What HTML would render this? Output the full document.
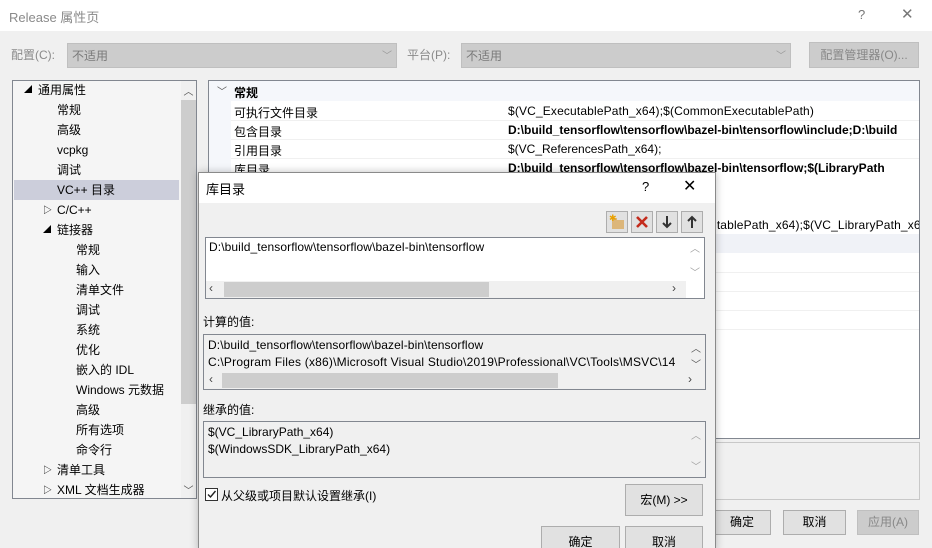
<!DOCTYPE html>
<html><head><meta charset="utf-8"><style>
*{box-sizing:border-box;margin:0;padding:0}
html,body{width:932px;height:548px;overflow:hidden}
body{background:#f0f0f0;font-family:"Liberation Sans","Noto Sans CJK SC",sans-serif;font-size:12px;color:#000;position:relative}
.a{position:absolute;white-space:nowrap}
.t{line-height:20px;height:20px}
.btn{position:absolute;background:#e1e1e1;border:1px solid #adadad;text-align:center}
.sb{position:absolute;color:#a0a0a0;font-size:10px;text-align:center}
</style></head><body>
<div class="a" style="left:0;top:0;width:932px;height:31px;background:#fff"></div>
<div class="a" style="left:9px;top:7px;color:#8a8a8a;font-size:13px">Release 属性页</div>
<div class="a" style="left:858px;top:7px;color:#777;font-size:13px">?</div>
<div class="a" style="left:901px;top:5px;color:#777;font-size:15px">✕</div>

<div class="a" style="left:11px;top:46px;color:#8a8a8a">配置(C):</div>
<div class="a" style="left:67px;top:43px;width:330px;height:25px;background:#cccccc;border:1px solid #bfbfbf"></div>
<div class="a" style="left:72px;top:47px;color:#7a7a7a">不适用</div>
<div class="a" style="left:382px;top:47px;color:#999;font-size:10px">﹀</div>
<div class="a" style="left:407px;top:46px;color:#8a8a8a">平台(P):</div>
<div class="a" style="left:461px;top:43px;width:330px;height:25px;background:#cccccc;border:1px solid #bfbfbf"></div>
<div class="a" style="left:466px;top:47px;color:#7a7a7a">不适用</div>
<div class="a" style="left:776px;top:47px;color:#999;font-size:10px">﹀</div>
<div class="btn" style="left:809px;top:42px;width:110px;height:26px;background:#cccccc;border-color:#bfbfbf;color:#888;line-height:24px">配置管理器(O)...</div>

<div class="a" style="left:12px;top:80px;width:185px;height:419px;background:#f5f5f5;border:1px solid #828790"></div>
<div class="a" style="left:181px;top:81px;width:15px;height:417px;background:#f0f0f0"></div>
<div class="a" style="left:181px;top:100px;width:15px;height:304px;background:#cdcdcd"></div>
<div class="sb" style="left:181px;top:83px;width:15px;color:#555">︿</div>
<div class="sb" style="left:181px;top:482px;width:15px;color:#555">﹀</div>
<div class="a" style="left:14px;top:180px;width:165px;height:20px;background:#cccedb"></div>
<div class="a t" style="left:24px;top:80px;font-size:8px">◢</div>
<div class="a t" style="left:38px;top:80px">通用属性</div>
<div class="a t" style="left:57px;top:100px">常规</div>
<div class="a t" style="left:57px;top:120px">高级</div>
<div class="a t" style="left:57px;top:140px">vcpkg</div>
<div class="a t" style="left:57px;top:160px">调试</div>
<div class="a t" style="left:57px;top:180px">VC++ 目录</div>
<div class="a t" style="left:43px;top:200px;font-size:9px">▷</div>
<div class="a t" style="left:57px;top:200px">C/C++</div>
<div class="a t" style="left:43px;top:220px;font-size:8px">◢</div>
<div class="a t" style="left:57px;top:220px">链接器</div>
<div class="a t" style="left:76px;top:240px">常规</div>
<div class="a t" style="left:76px;top:260px">输入</div>
<div class="a t" style="left:76px;top:280px">清单文件</div>
<div class="a t" style="left:76px;top:300px">调试</div>
<div class="a t" style="left:76px;top:320px">系统</div>
<div class="a t" style="left:76px;top:340px">优化</div>
<div class="a t" style="left:76px;top:360px">嵌入的 IDL</div>
<div class="a t" style="left:76px;top:380px">Windows 元数据</div>
<div class="a t" style="left:76px;top:400px">高级</div>
<div class="a t" style="left:76px;top:420px">所有选项</div>
<div class="a t" style="left:76px;top:440px">命令行</div>
<div class="a t" style="left:43px;top:460px;font-size:9px">▷</div>
<div class="a t" style="left:57px;top:460px">清单工具</div>
<div class="a t" style="left:43px;top:480px;font-size:9px">▷</div>
<div class="a t" style="left:57px;top:480px">XML 文档生成器</div>

<div class="a" style="left:208px;top:80px;width:712px;height:359px;background:#fff;border:1px solid #828790;overflow:hidden">
 <div class="a" style="left:0;top:0;width:710px;height:20px;background:#f5f7fb"></div>
 <div class="a" style="left:0;top:0;width:22px;height:360px;background:#f5f7fb"></div>
 <div class="a" style="left:0;top:153px;width:710px;height:19px;background:#f0f2f7"></div>
 <div class="a" style="left:22px;top:39px;width:690px;border-top:1px solid #f0f0f0"></div>
 <div class="a" style="left:22px;top:58px;width:690px;border-top:1px solid #f0f0f0"></div>
 <div class="a" style="left:22px;top:77px;width:690px;border-top:1px solid #f0f0f0"></div>
 <div class="a" style="left:22px;top:191px;width:690px;border-top:1px solid #f0f0f0"></div>
 <div class="a" style="left:22px;top:210px;width:690px;border-top:1px solid #f0f0f0"></div>
 <div class="a" style="left:22px;top:229px;width:690px;border-top:1px solid #f0f0f0"></div>
 <div class="a" style="left:22px;top:248px;width:690px;border-top:1px solid #f0f0f0"></div>
 <div class="a" style="left:8px;top:2px;font-size:10px;color:#555">﹀</div>
 <div class="a" style="left:25px;top:3px;font-weight:bold">常规</div>
 <div class="a" style="left:25px;top:23px">可执行文件目录</div>
 <div class="a" style="left:299px;top:23px;letter-spacing:0.15px">$(VC_ExecutablePath_x64);$(CommonExecutablePath)</div>
 <div class="a" style="left:25px;top:42px">包含目录</div>
 <div class="a" style="left:299px;top:42px;font-weight:bold">D:\build_tensorflow\tensorflow\bazel-bin\tensorflow\include;D:\build</div>
 <div class="a" style="left:25px;top:61px">引用目录</div>
 <div class="a" style="left:299px;top:61px">$(VC_ReferencesPath_x64);</div>
 <div class="a" style="left:25px;top:80px">库目录</div>
 <div class="a" style="left:299px;top:80px;font-weight:bold">D:\build_tensorflow\tensorflow\bazel-bin\tensorflow;$(LibraryPath</div>
 <div class="a" style="left:258px;top:137px;letter-spacing:0.15px">$(VC_ExecutablePath_x64);$(CommonExecutablePath_x64);$(VC_LibraryPath_x64);</div>
</div>
<div class="a" style="left:208px;top:442px;width:712px;height:58px;border:1px solid #c8c8c8"></div>
<div class="btn" style="left:713px;top:510px;width:58px;height:25px;line-height:23px">确定</div>
<div class="btn" style="left:783px;top:510px;width:63px;height:25px;line-height:23px">取消</div>
<div class="btn" style="left:857px;top:510px;width:62px;height:25px;line-height:23px;background:#cccccc;border-color:#bfbfbf;color:#888">应用(A)</div>

<div class="a" style="left:198px;top:172px;width:518px;height:380px;background:#f0f0f0;border:1px solid #8a8a8a;box-shadow:0 0 8px rgba(0,0,0,.25)"></div>
<div class="a" style="left:199px;top:173px;width:516px;height:30px;background:#fff"></div>
<div class="a" style="left:206px;top:179px;font-size:13px">库目录</div>
<div class="a" style="left:642px;top:179px;font-size:13px">?</div>
<div class="a" style="left:683px;top:176px;font-size:16px">✕</div>

<div class="btn" style="left:606px;top:211px;width:22px;height:22px;background:#e1e1e1">
 <svg width="20" height="20" style="position:absolute;left:0;top:0"><rect x="5" y="8" width="12" height="9" fill="#dcb67a"/><rect x="5" y="6" width="5" height="3" fill="#dcb67a"/><text x="2" y="9" font-size="9" fill="#e8a000">✱</text></svg>
</div>
<div class="btn" style="left:631px;top:211px;width:22px;height:22px">
 <svg width="20" height="20" style="position:absolute;left:0;top:0"><path d="M5 5L15 15M15 5L5 15" stroke="#c42b1c" stroke-width="2.6"/></svg>
</div>
<div class="btn" style="left:656px;top:211px;width:22px;height:22px">
 <svg width="20" height="20" style="position:absolute;left:0;top:0"><path d="M10 4V15M6 11L10 15L14 11" stroke="#333" stroke-width="2" fill="none"/></svg>
</div>
<div class="btn" style="left:681px;top:211px;width:22px;height:22px">
 <svg width="20" height="20" style="position:absolute;left:0;top:0"><path d="M10 16V5M6 9L10 5L14 9" stroke="#333" stroke-width="2" fill="none"/></svg>
</div>

<div class="a" style="left:205px;top:237px;width:500px;height:62px;background:#fff;border:1px solid #828790"></div>
<div class="a" style="left:209px;top:240px;letter-spacing:0.1px">D:\build_tensorflow\tensorflow\bazel-bin\tensorflow</div>
<div class="sb" style="left:687px;top:240px;width:16px">︿</div>
<div class="sb" style="left:687px;top:264px;width:16px">﹀</div>
<div class="a" style="left:206px;top:281px;width:480px;height:17px;background:#f0f0f0"></div>
<div class="a" style="left:224px;top:282px;width:265px;height:15px;background:#cdcdcd"></div>
<div class="a" style="left:209px;top:281px;color:#444;font-size:12px">‹</div>
<div class="a" style="left:672px;top:281px;color:#444;font-size:12px">›</div>

<div class="a" style="left:203px;top:313px">计算的值:</div>
<div class="a" style="left:203px;top:334px;width:503px;height:56px;border:1px solid #828790"></div>
<div class="a" style="left:208px;top:338px;letter-spacing:0.1px">D:\build_tensorflow\tensorflow\bazel-bin\tensorflow</div>
<div class="a" style="left:208px;top:355px;width:478px;overflow:hidden;letter-spacing:0.2px">C:\Program Files (x86)\Microsoft Visual Studio\2019\Professional\VC\Tools\MSVC\14</div>
<div class="sb" style="left:689px;top:340px;width:14px;color:#555">︿</div>
<div class="sb" style="left:689px;top:356px;width:14px;color:#555">﹀</div>
<div class="a" style="left:222px;top:373px;width:336px;height:15px;background:#cdcdcd"></div>
<div class="a" style="left:209px;top:372px;color:#444;font-size:12px">‹</div>
<div class="a" style="left:688px;top:372px;color:#444;font-size:12px">›</div>

<div class="a" style="left:203px;top:401px">继承的值:</div>
<div class="a" style="left:203px;top:421px;width:503px;height:57px;border:1px solid #828790"></div>
<div class="a" style="left:208px;top:425px">$(VC_LibraryPath_x64)</div>
<div class="a" style="left:208px;top:442px">$(WindowsSDK_LibraryPath_x64)</div>
<div class="sb" style="left:689px;top:427px;width:14px">︿</div>
<div class="sb" style="left:689px;top:458px;width:14px">﹀</div>

<div class="a" style="left:205px;top:488px;width:13px;height:13px;border:1px solid #333;background:#fff">
 <svg width="11" height="11" style="position:absolute;left:0;top:0"><path d="M2 5.5L4.5 8L9.5 2" stroke="#222" stroke-width="1.4" fill="none"/></svg>
</div>
<div class="a" style="left:221px;top:487px">从父级或项目默认设置继承(I)</div>
<div class="btn" style="left:625px;top:484px;width:78px;height:32px;line-height:30px">宏(M) &gt;&gt;</div>
<div class="btn" style="left:541px;top:526px;width:79px;height:30px;line-height:30px">确定</div>
<div class="btn" style="left:625px;top:526px;width:78px;height:30px;line-height:30px">取消</div>
</body></html>
